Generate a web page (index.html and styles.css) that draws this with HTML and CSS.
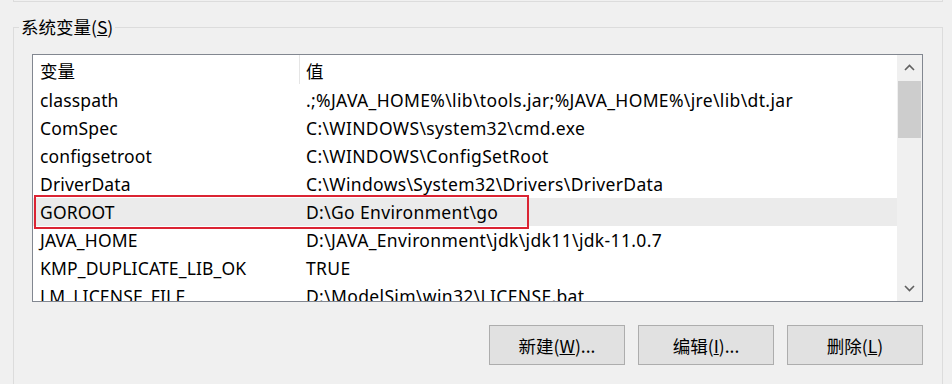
FILE: index.html
```html
<!DOCTYPE html>
<html lang="zh-CN">
<head>
<meta charset="utf-8">
<title>系统变量</title>
<link rel="stylesheet" href="styles.css">
</head>
<body>
<div class="prev-group"></div>
<fieldset class="group">
  <legend class="group-title">系统变量(<u>S</u>)</legend>
  <div class="listbox">
    <div class="list-main">
      <div class="list-header">
        <div class="col col-name">变量</div>
        <div class="col col-value">值</div>
      </div>
      <div class="list-rows">
        <div class="row"><div class="col col-name">classpath</div><div class="col col-value">.;%JAVA_HOME%\lib\tools.jar;%JAVA_HOME%\jre\lib\dt.jar</div></div>
        <div class="row"><div class="col col-name">ComSpec</div><div class="col col-value">C:\WINDOWS\system32\cmd.exe</div></div>
        <div class="row"><div class="col col-name">configsetroot</div><div class="col col-value">C:\WINDOWS\ConfigSetRoot</div></div>
        <div class="row"><div class="col col-name">DriverData</div><div class="col col-value">C:\Windows\System32\Drivers\DriverData</div></div>
        <div class="row row-selected"><div class="col col-name">GOROOT</div><div class="col col-value">D:\Go Environment\go</div></div>
        <div class="row"><div class="col col-name">JAVA_HOME</div><div class="col col-value">D:\JAVA_Environment\jdk\jdk11\jdk-11.0.7</div></div>
        <div class="row"><div class="col col-name">KMP_DUPLICATE_LIB_OK</div><div class="col col-value">TRUE</div></div>
        <div class="row"><div class="col col-name">LM_LICENSE_FILE</div><div class="col col-value">D:\ModelSim\win32\LICENSE.bat</div></div>
      </div>
    </div>
    <div class="scrollbar">
      <div class="sb-btn">
        <svg width="11" height="7" viewBox="0 0 11 7"><path d="M1 6 L5.5 1.5 L10 6" fill="none" stroke="#606060" stroke-width="1.6"/></svg>
      </div>
      <div class="sb-track"><div class="sb-thumb"></div></div>
      <div class="sb-btn">
        <svg width="11" height="7" viewBox="0 0 11 7"><path d="M1 1 L5.5 5.5 L10 1" fill="none" stroke="#606060" stroke-width="1.6"/></svg>
      </div>
    </div>
    <div class="highlight-box"></div>
  </div>
  <div class="buttons">
    <button class="btn">新建(<u>W</u>)...</button>
    <button class="btn">编辑(<u>I</u>)...</button>
    <button class="btn">删除(<u>L</u>)</button>
  </div>
</fieldset>
</body>
</html>
```
FILE: styles.css
```css
html, body {
  margin: 0;
  padding: 0;
  background: #f0f0f0;
  height: 384px;
  overflow: hidden;
}
body {
  font-family: "Noto Sans", "Noto Sans CJK SC", sans-serif;
  font-size: 17.5px;
  color: #000;
}
.prev-group {
  box-sizing: border-box;
  margin-left: 13px;
  width: 930px;
  height: 2px;
  border: 1px solid #dcdcdc;
  border-top: none;
}
.group {
  box-sizing: border-box;
  margin: 13px 0 0 13px;
  width: 930px;
  height: 369px;
  border: 1px solid #dcdcdc;
  border-bottom: none;
  padding: 15px 19px 0 18px;
  min-width: 0;
}
.group-title {
  margin-left: -13px;
  padding: 0 2px;
  line-height: 24px;
  font-family: "Noto Sans CJK SC", sans-serif;
}
.listbox {
  position: relative;
  box-sizing: border-box;
  height: 248px;
  border: 1px solid #828790;
  background: #fff;
  display: flex;
  overflow: hidden;
}
.list-main {
  flex: 1;
  min-width: 0;
  display: flex;
  flex-direction: column;
}
.list-header {
  display: flex;
  height: 31px;
  flex: none;
}
.list-header .col {
  line-height: 31px;
  font-family: "Noto Sans CJK SC", sans-serif;
}
.list-header .col-name {
  border-right: 1px solid #e5e5e5;
  height: 29px;
}
.col {
  white-space: nowrap;
  overflow: hidden;
}
.col-name {
  box-sizing: border-box;
  width: 267px;
  padding-left: 7px;
  flex: none;
}
.col-value {
  padding-left: 6px;
  flex: 1;
}
.row {
  display: flex;
  height: 28px;
  line-height: 28px;
  flex: none;
}
.row .col {
  letter-spacing: 0.35px;
}
.row .col-name {
  letter-spacing: 0.15px;
}
.row-selected {
  background: #ebebeb;
}
.scrollbar {
  width: 25px;
  flex: none;
  background: #f0f0f0;
  display: flex;
  flex-direction: column;
}
.sb-btn {
  height: 25px;
  flex: none;
  display: flex;
  align-items: center;
  justify-content: center;
}
.sb-track {
  flex: 1;
  padding: 1px 1px 0 1px;
}
.sb-thumb {
  height: 57px;
  background: #cdcdcd;
}
.highlight-box {
  position: absolute;
  left: 1px;
  top: 140px;
  width: 495px;
  height: 34px;
  box-sizing: border-box;
  border: 2px solid #db2433;
  pointer-events: none;
}
.buttons {
  display: flex;
  justify-content: flex-end;
  gap: 13px;
  margin-top: 23px;
}
.btn {
  box-sizing: border-box;
  width: 136px;
  height: 40px;
  background: #e1e1e1;
  border: 1px solid #adadad;
  border-radius: 0;
  font-family: "Noto Sans CJK SC", sans-serif;
  font-size: 17.5px;
  color: #000;
  padding: 0;
}
```
